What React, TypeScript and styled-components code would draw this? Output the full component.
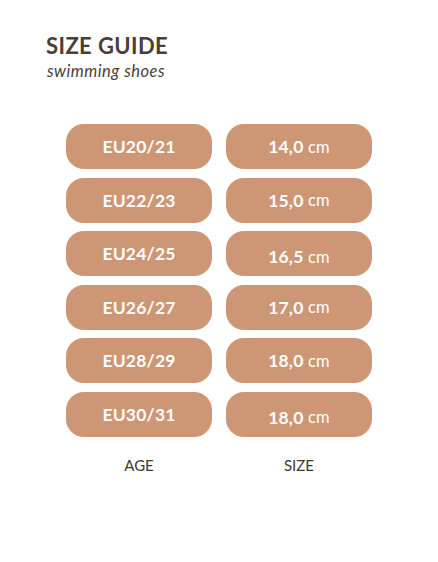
import styled, { createGlobalStyle } from "styled-components";

const GlobalStyle = createGlobalStyle`
  body {
    margin: 0;
    background: #ffffff;
    font-family: Lato, "Open Sans", sans-serif;
  }
`;

const sizes = [
  { age: "EU20/21", cm: "14,0", drop: 0 },
  { age: "EU22/23", cm: "15,0", drop: 0 },
  { age: "EU24/25", cm: "16,5", drop: 3 },
  { age: "EU26/27", cm: "17,0", drop: 0 },
  { age: "EU28/29", cm: "18,0", drop: 0 },
  { age: "EU30/31", cm: "18,0", drop: 3 },
];

export default function App() {
  return (
    <>
      <GlobalStyle />
      <Page>
        <Header>
          <Title>SIZE GUIDE</Title>
          <Subtitle>swimming shoes</Subtitle>
        </Header>
        <Table>
          {sizes.map((s) => (
            <Row key={s.age}>
              <Pill>{s.age}</Pill>
              <Pill $drop={s.drop}>
                {s.cm} <Unit>cm</Unit>
              </Pill>
            </Row>
          ))}
          <Row>
            <Label>AGE</Label>
            <Label>SIZE</Label>
          </Row>
        </Table>
      </Page>
    </>
  );
}

const Page = styled.div`
  width: 438px;
  height: 562px;
  padding: 33px 0 0 46px;
  box-sizing: border-box;
`;

const Header = styled.div`
  display: flex;
  flex-direction: column;
`;

const Title = styled.div`
  font-size: 22px;
  font-weight: 700;
  color: #4a3f38;
  letter-spacing: 0.4px;
  line-height: 26px;
`;

const Subtitle = styled.div`
  font-size: 16.5px;
  font-style: italic;
  color: #4a3f38;
  letter-spacing: 0.5px;
  line-height: 20px;
  margin-top: 2px;
  padding-left: 1px;
`;

const Table = styled.div`
  display: flex;
  flex-direction: column;
  gap: 8.6px;
  margin: 43px 0 0 20px;
`;

const Row = styled.div`
  display: grid;
  grid-template-columns: 146px 146px;
  column-gap: 14px;
`;

const Pill = styled.div<{ $drop?: number }>`
  height: 45px;
  border-radius: 18px;
  background: #cd9674;
  color: #ffffff;
  font-size: 17.5px;
  font-weight: 700;
  letter-spacing: 0.2px;
  display: flex;
  align-items: center;
  justify-content: center;
  padding-top: ${(p) => (p.$drop ?? 0) * 2}px;
  box-sizing: border-box;
  white-space: pre;
`;

const Unit = styled.span`
  font-weight: 400;
  font-size: 16.5px;
`;

const Label = styled.div`
  text-align: center;
  font-size: 15px;
  color: #3d3733;
  margin-top: 10px;
`;
